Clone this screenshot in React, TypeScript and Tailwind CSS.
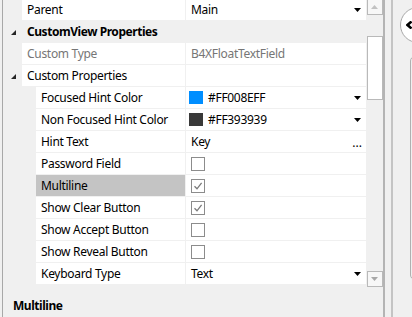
import React from 'react';

const Caret = () => (
  <svg width="7" height="4" viewBox="0 0 7 4" className="ml-auto mr-[5px]">
    <path d="M0 0H7L3.5 4Z" fill="#000" />
  </svg>
);

const Expander = () => (
  <svg width="5" height="5" viewBox="0 0 5 5">
    <path d="M5 0V5H0Z" fill="#262626" />
  </svg>
);

const Check = ({ checked }: { checked?: boolean }) => (
  <div className="w-[14px] h-[14px] border border-[#8c8c8c] bg-white flex items-center justify-center">
    {checked && (
      <svg width="10" height="10" viewBox="0 0 10 10">
        <path d="M1.5 5.2L4 7.8L8.6 1.8" fill="none" stroke="#7a7a7a" strokeWidth="1.3" />
      </svg>
    )}
  </div>
);

const Swatch = ({ color, label }: { color: string; label: string }) => (
  <>
    <div className="w-[14px] h-[13px] ml-[-2px]" style={{ backgroundColor: color }} />
    <span className="ml-[5px]">{label}</span>
    <Caret />
  </>
);

interface RowProps {
  name: string;
  nested?: boolean;
  selected?: boolean;
  disabled?: boolean;
  expander?: boolean;
  first?: boolean;
  children?: React.ReactNode;
}

const PropRow: React.FC<RowProps> = ({ name, nested, selected, disabled, expander, first, children }) => (
  <div className={`flex border-b border-[#f0f0f0] ${first ? 'h-[21px]' : 'h-[22px]'}`}>
    <div className={`${nested ? 'w-[33px]' : 'w-[19px]'} shrink-0 flex items-center justify-end pr-[6px] pt-[1px]`}>
      {expander && <Expander />}
    </div>
    <div
      className={`flex-1 flex items-center pl-[5px] ${selected ? 'bg-[#c4c4c4]' : 'bg-white'} ${
        disabled ? 'text-[#767676]' : 'text-black'
      }`}
    >
      {name}
    </div>
    <div className="w-px bg-[#f0f0f0]" />
    <div className={`w-[180px] shrink-0 bg-white flex items-center pl-[5px] ${disabled ? 'text-[#767676]' : 'text-black'}`}>
      {children}
    </div>
  </div>
);

const SectionRow = ({ name }: { name: string }) => (
  <div className="flex h-[22px] border-b border-[#f0f0f0] bg-[#f0f0f0]">
    <div className="w-[19px] shrink-0 flex items-center justify-end pr-[6px] pt-[1px]">
      <Expander />
    </div>
    <div className="flex items-center pl-[5px] font-bold tracking-[-0.45px]">{name}</div>
  </div>
);

const ScrollBar = () => (
  <div className="w-[17px] h-[288px] flex flex-col items-center">
    <div className="w-[16px] h-[15px] border border-[#b9b9b9] border-t-0 bg-[#f7f7f7] flex items-center justify-center">
      <svg width="7" height="4" viewBox="0 0 7 4">
        <path d="M0 4H7L3.5 0Z" fill="#c2c2c2" />
      </svg>
    </div>
    <div className="w-[16px] h-[64px] mt-[21px] border border-[#b9b9b9] bg-white" />
    <div className="flex-1" />
    <div className="w-[16px] h-[16px] border border-[#b9b9b9] bg-[#f7f7f7] flex items-center justify-center mb-px">
      <svg width="7" height="4" viewBox="0 0 7 4">
        <path d="M0 0H7L3.5 4Z" fill="#a8a8a8" />
      </svg>
    </div>
  </div>
);

export default function App() {
  return (
    <div className="w-[412px] h-[317px] bg-[#f0f0f0] flex overflow-hidden font-['Noto_Sans',sans-serif] text-[12px] leading-[16px] tracking-[-0.3px]">
      <div className="pl-[2px] flex">
        <div className="w-[381px] border-l border-[#a8a8a8] flex flex-col">
          <div className="flex items-start">
            <div className="w-[363px] flex flex-col">
              <PropRow name="Parent" first>
                <span>Main</span>
                <Caret />
              </PropRow>
              <SectionRow name="CustomView Properties" />
              <PropRow name="Custom Type" disabled>
                <span>B4XFloatTextField</span>
              </PropRow>
              <PropRow name="Custom Properties" expander />
              <PropRow name="Focused Hint Color" nested>
                <Swatch color="#008EFF" label="#FF008EFF" />
              </PropRow>
              <PropRow name="Non Focused Hint Color" nested>
                <Swatch color="#393939" label="#FF393939" />
              </PropRow>
              <PropRow name="Hint Text" nested>
                <span>Key</span>
                <span className="ml-auto mr-[4px] tracking-[0px] pt-[2px]">...</span>
              </PropRow>
              <PropRow name="Password Field" nested>
                <Check />
              </PropRow>
              <PropRow name="Multiline" nested selected>
                <Check checked />
              </PropRow>
              <PropRow name="Show Clear Button" nested>
                <Check checked />
              </PropRow>
              <PropRow name="Show Accept Button" nested>
                <Check />
              </PropRow>
              <PropRow name="Show Reveal Button" nested>
                <Check />
              </PropRow>
              <PropRow name="Keyboard Type" nested>
                <span>Text</span>
                <Caret />
              </PropRow>
            </div>
            <ScrollBar />
          </div>
          <div className="pl-[10px] pt-[10px] font-bold text-black tracking-[-0.45px]">Multiline</div>
        </div>
      </div>
      <div className="w-[2px] bg-[#b4b4b4]" />
      <div className="w-[6px]" />
      <div className="w-[2px] bg-[#c4c4c4]" />
      <div className="relative flex-1">
        <div className="absolute left-[7px] top-[7px] w-[36px] h-[36px] rounded-full border border-[#a8a8a8] bg-white flex items-center pl-[5px]">
          <svg width="8" height="8" viewBox="0 0 8 8">
            <path d="M5.5 0.5L1.5 4L5.5 7.5" fill="none" stroke="#000" strokeWidth="2.6" />
          </svg>
        </div>
        <div className="absolute left-[17px] top-[56px] w-[20px] h-[224px] rounded-[5px] border border-[#b0b0b0]" />
      </div>
    </div>
  );
}
